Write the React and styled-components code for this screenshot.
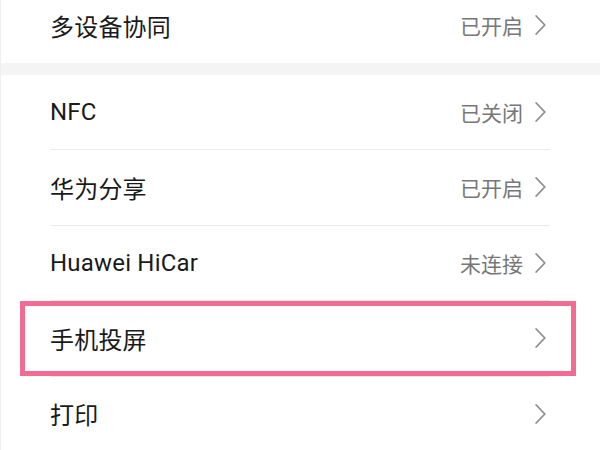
import React from "react";
import styled, { createGlobalStyle } from "styled-components";

const GlobalStyle = createGlobalStyle`
  html, body {
    margin: 0;
    padding: 0;
    background: #ffffff;
    overflow: hidden;
  }
  body {
    font-family: Roboto, "Noto Sans CJK SC", sans-serif;
  }
`;

const Screen = styled.div`
  width: 600px;
  height: 450px;
  overflow: hidden;
  background: #ffffff;
  border-left: 1px solid #efefef;
  box-sizing: border-box;
`;

const Section = styled.div`
  margin-top: ${(props) => (props.cropped ? "-12px" : "0")};
  background: #ffffff;
`;

const Band = styled.div`
  height: 12px;
  background: #f4f4f4;
`;

const Row = styled.div`
  position: relative;
  height: 74.5px;
  display: flex;
  align-items: center;
  justify-content: space-between;
  padding: 0 54px 0 49px;
  box-sizing: border-box;

  ${(props) =>
    props.highlight &&
    `
    &::after {
      content: "";
      position: absolute;
      top: 0;
      bottom: 0;
      left: 19px;
      right: 24px;
      border: 5px solid #f26b92;
      pointer-events: none;
    }
  `}
`;

const Label = styled.span`
  font-size: 24px;
  color: #1a1a1a;
  letter-spacing: 0.2px;
`;

const Trailing = styled.div`
  display: flex;
  align-items: center;
  gap: 12px;
`;

const Status = styled.span`
  font-size: 21px;
  color: #777777;
`;

const Divider = styled.div`
  height: 1px;
  margin: 0 50px;
  background: #e9e9e9;
`;

const Chevron = () => (
  <svg width="11" height="20" viewBox="0 0 11 20">
    <polyline
      points="1.2,1 9.8,10 1.2,19"
      fill="none"
      stroke="#8e8e8e"
      strokeWidth="1.8"
      strokeLinecap="round"
      strokeLinejoin="round"
    />
  </svg>
);

const SettingRow = ({ label, status, highlight }) => (
  <Row highlight={highlight}>
    <Label>{label}</Label>
    <Trailing>
      {status && <Status>{status}</Status>}
      <Chevron />
    </Trailing>
  </Row>
);

const items = [
  { label: "NFC", status: "已关闭" },
  { label: "华为分享", status: "已开启" },
  { label: "Huawei HiCar", status: "未连接" },
  { label: "手机投屏", highlight: true },
  { label: "打印" },
];

export default function App() {
  return (
    <Screen>
      <GlobalStyle />
      <Section cropped>
        <SettingRow label="多设备协同" status="已开启" />
      </Section>
      <Band />
      <Section>
        {items.map((item, index) => (
          <React.Fragment key={item.label}>
            {index > 0 && <Divider />}
            <SettingRow {...item} />
          </React.Fragment>
        ))}
      </Section>
    </Screen>
  );
}
